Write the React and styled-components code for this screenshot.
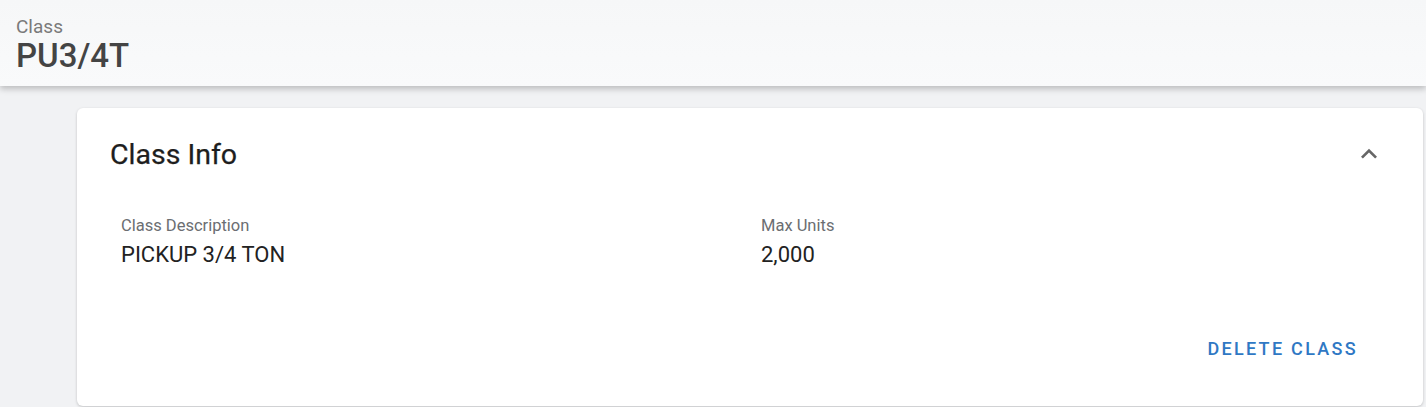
import React from "react";
import styled, { createGlobalStyle } from "styled-components";

const Global = createGlobalStyle`
  html, body { margin: 0; padding: 0; }
  body {
    background: #f1f2f4;
    font-family: Roboto, "Liberation Sans", Arial, sans-serif;
    width: 1426px;
    height: 407px;
    overflow: hidden;
  }
`;

const Page = styled.div`
  display: flex;
  flex-direction: column;
  height: 407px;
`;

const Header = styled.header`
  position: relative;
  z-index: 1;
  height: 86px;
  box-sizing: border-box;
  padding: 16px 16px 0;
  background: linear-gradient(#f6f7f8, #f9fafb);
  box-shadow: 0 3px 6px rgba(0, 0, 0, 0.22);
  display: flex;
  flex-direction: column;
`;

const HeaderLabel = styled.div`
  font-size: 19px;
  color: #7a7a7a;
  line-height: 22px;
`;

const HeaderTitle = styled.div`
  font-size: 33px;
  font-weight: 500;
  color: #444;
  line-height: 36px;
`;

const Content = styled.main`
  flex: 1;
  padding: 22px 3px 1px 77px;
  display: flex;
  flex-direction: column;
`;

const Card = styled.section`
  flex: 1;
  background: #fff;
  border-radius: 6px;
  box-shadow: 0 1px 3px rgba(0, 0, 0, 0.2);
  padding: 30px 33px 0 33px;
  display: flex;
  flex-direction: column;
`;

const CardHeader = styled.div`
  display: flex;
  align-items: center;
  justify-content: space-between;
  height: 32px;
`;

const CardTitle = styled.h2`
  margin: 0;
  font-size: 28.5px;
  font-weight: 400;
  color: #1e1e1e;
  -webkit-text-stroke: 0.25px #1e1e1e;
`;

const Toggle = styled.button`
  border: 0;
  background: none;
  padding: 0;
  margin-right: 5px;
  display: flex;
  color: #666;
`;

const Fields = styled.div`
  display: grid;
  grid-template-columns: 640px 640px;
  padding: 46px 0 0 11px;
`;

const Field = styled.div`
  display: flex;
  flex-direction: column;
`;

const FieldLabel = styled.div`
  font-size: 16.5px;
  color: #6b6e72;
  line-height: 20px;
`;

const FieldValue = styled.div`
  font-size: 22px;
  color: #222;
  line-height: 26px;
  margin-top: 6px;
`;

const Actions = styled.div`
  display: flex;
  justify-content: flex-end;
  padding-top: 70px;
  padding-right: 32px;
`;

const TextButton = styled.button`
  border: 0;
  background: none;
  padding: 0;
  font-family: inherit;
  font-size: 18px;
  line-height: 21px;
  font-weight: 500;
  letter-spacing: 2.3px;
  color: #2f78c4;
  text-transform: uppercase;
  cursor: pointer;
`;

const ChevronUp = () => (
  <svg width="32" height="32" viewBox="0 0 24 24" fill="currentColor">
    <path d="M12 8l-6 6 1.41 1.41L12 10.83l4.59 4.58L18 14z" />
  </svg>
);

export default function App() {
  return (
    <>
      <Global />
      <Page>
        <Header>
          <HeaderLabel>Class</HeaderLabel>
          <HeaderTitle>PU3/4T</HeaderTitle>
        </Header>
        <Content>
          <Card>
            <CardHeader>
              <CardTitle>Class Info</CardTitle>
              <Toggle aria-label="Collapse">
                <ChevronUp />
              </Toggle>
            </CardHeader>
            <Fields>
              <Field>
                <FieldLabel>Class Description</FieldLabel>
                <FieldValue>PICKUP 3/4 TON</FieldValue>
              </Field>
              <Field>
                <FieldLabel>Max Units</FieldLabel>
                <FieldValue>2,000</FieldValue>
              </Field>
            </Fields>
            <Actions>
              <TextButton>Delete Class</TextButton>
            </Actions>
          </Card>
        </Content>
      </Page>
    </>
  );
}
